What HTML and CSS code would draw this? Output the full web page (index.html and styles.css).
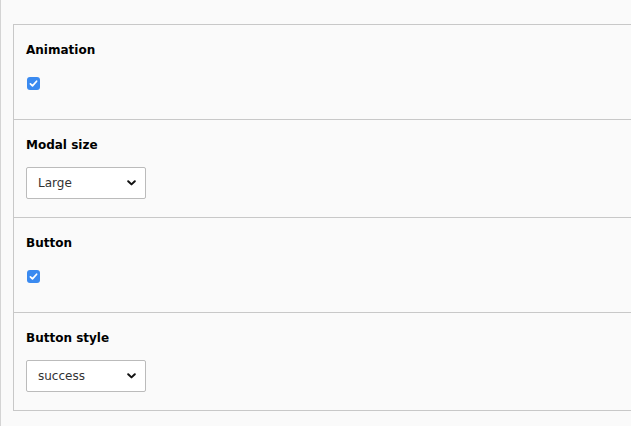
FILE: index.html
```html
<!DOCTYPE html>
<html lang="en">
<head>
<meta charset="utf-8">
<title>Settings</title>
<link rel="stylesheet" href="styles.css">
</head>
<body>
<div class="page">
  <div class="panel">
    <div class="field field-check">
      <div class="label">Animation</div>
      <span class="check"><svg viewBox="0 0 13 13" width="13" height="13"><rect x="0" y="0" width="13" height="13" rx="3" fill="#3a8af0"/><path d="M3.4 6.8 L5.5 8.9 L9.6 4.2" fill="none" stroke="#fff" stroke-width="1.7" stroke-linecap="round" stroke-linejoin="round"/></svg></span>
    </div>
    <div class="field field-select">
      <div class="label">Modal size</div>
      <div class="select"><span>Large</span><svg class="chev" viewBox="0 0 9 6" width="9" height="6"><path d="M1.2 1.2 L4.5 4.4 L7.8 1.2" fill="none" stroke="#111" stroke-width="2" stroke-linecap="round" stroke-linejoin="round"/></svg></div>
    </div>
    <div class="field field-check">
      <div class="label">Button</div>
      <span class="check"><svg viewBox="0 0 13 13" width="13" height="13"><rect x="0" y="0" width="13" height="13" rx="3" fill="#3a8af0"/><path d="M3.4 6.8 L5.5 8.9 L9.6 4.2" fill="none" stroke="#fff" stroke-width="1.7" stroke-linecap="round" stroke-linejoin="round"/></svg></span>
    </div>
    <div class="field field-select">
      <div class="label">Button style</div>
      <div class="select"><span>success</span><svg class="chev" viewBox="0 0 9 6" width="9" height="6"><path d="M1.2 1.2 L4.5 4.4 L7.8 1.2" fill="none" stroke="#111" stroke-width="2" stroke-linecap="round" stroke-linejoin="round"/></svg></div>
    </div>
  </div>
</div>
</body>
</html>
```
FILE: styles.css
```css
html, body {
  margin: 0;
  padding: 0;
  overflow: hidden;
  background: #fafafa;
}
body {
  font-family: Verdana, "DejaVu Sans", sans-serif;
  color: #000;
  height: 426px;
}
.page {
  border-left: 1px solid #d4d4d4;
  height: 426px;
  box-sizing: border-box;
  padding: 24px 0 0 12px;
}
.panel {
  border: 1px solid #c8c8c8;
  border-right: none;
  background: #fafafa;
}
.field {
  padding: 16px 12px 0 12px;
  border-top: 1px solid #c8c8c8;
}
.field:first-child {
  border-top: none;
}
.label {
  font-size: 12px;
  font-weight: bold;
  line-height: 18px;
  height: 18px;
}
.field-check {
  height: 78px;
}
.field-check .check {
  display: block;
  width: 13px;
  height: 13px;
  margin: 18px 0 0 1px;
}
.check svg {
  display: block;
}
.field-select {
  height: 81px;
}
.select {
  margin-top: 13px;
  width: 120px;
  height: 32px;
  box-sizing: border-box;
  border: 1px solid #bbb;
  border-radius: 2px;
  background: #fff;
  display: flex;
  align-items: center;
  justify-content: space-between;
  padding: 0 9px 1px 11px;
  font-size: 12px;
  color: #333;
}
.chev {
  display: block;
}
```
